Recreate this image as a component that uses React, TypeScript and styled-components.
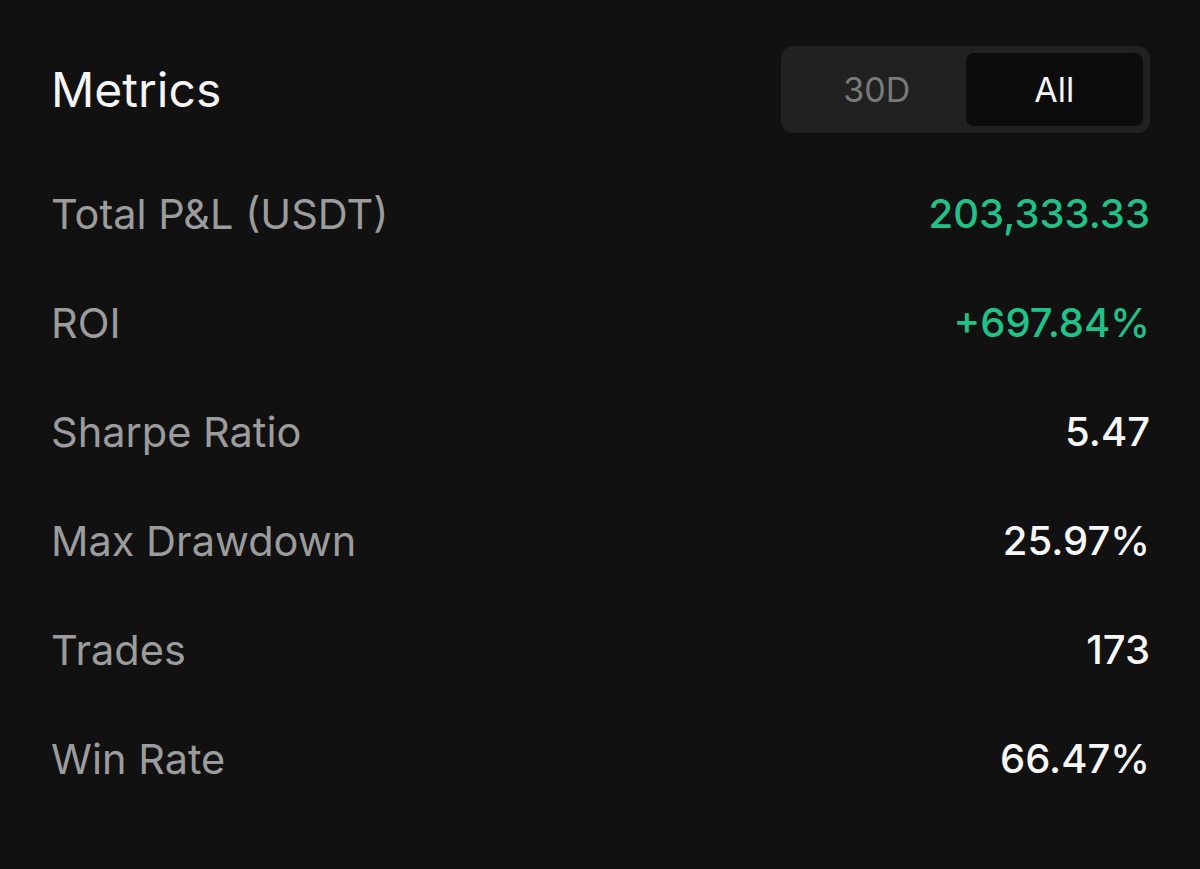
import * as React from 'react';
import styled, { createGlobalStyle } from 'styled-components';

const GlobalStyle = createGlobalStyle`
  html, body {
    margin: 0;
    padding: 0;
    background: #111111;
  }
  body {
    font-family: Inter, "Noto Sans", sans-serif;
  }
`;

const Panel = styled.div`
  width: 1200px;
  height: 869px;
  box-sizing: border-box;
  padding: 46px 50px 0 51px;
  background: #111111;
`;

const Header = styled.div`
  display: flex;
  justify-content: space-between;
  align-items: center;
  height: 87px;
`;

const Title = styled.h2`
  margin: 0;
  font-size: 48px;
  font-weight: 400;
  color: #f4f4f4;
`;

const Toggle = styled.div`
  display: flex;
  width: 369px;
  height: 87px;
  box-sizing: border-box;
  padding: 7px;
  border-radius: 12px;
  background: #212121;
`;

const Segment = styled.div<{ $active?: boolean }>`
  flex: 1;
  display: flex;
  align-items: center;
  justify-content: center;
  border-radius: 8px;
  font-size: 34px;
  color: ${(p) => (p.$active ? '#f5f5f5' : '#7a7a7a')};
  background: ${(p) => (p.$active ? '#0c0c0c' : 'transparent')};
`;

const List = styled.div`
  display: flex;
  flex-direction: column;
  margin-top: 26px;
`;

const Row = styled.div`
  display: flex;
  justify-content: space-between;
  align-items: center;
  height: 109px;
`;

const Label = styled.span`
  font-size: 41.5px;
  color: #9c9c9c;
`;

const Value = styled.span<{ $tone?: 'up' }>`
  font-size: 40px;
  color: ${(p) => (p.$tone === 'up' ? '#21c288' : '#f6f6f6')};
  font-weight: 500;
`;

const metrics: { label: string; value: string; tone?: 'up' }[] = [
  { label: 'Total P&L (USDT)', value: '203,333.33', tone: 'up' },
  { label: 'ROI', value: '+697.84%', tone: 'up' },
  { label: 'Sharpe Ratio', value: '5.47' },
  { label: 'Max Drawdown', value: '25.97%' },
  { label: 'Trades', value: '173' },
  { label: 'Win Rate', value: '66.47%' },
];

export default function App() {
  const [range, setRange] = React.useState<'30D' | 'All'>('All');
  return (
    <Panel>
      <GlobalStyle />
      <Header>
        <Title>Metrics</Title>
        <Toggle>
          <Segment $active={range === '30D'} onClick={() => setRange('30D')}>30D</Segment>
          <Segment $active={range === 'All'} onClick={() => setRange('All')}>All</Segment>
        </Toggle>
      </Header>
      <List>
        {metrics.map((m) => (
          <Row key={m.label}>
            <Label>{m.label}</Label>
            <Value $tone={m.tone}>{m.value}</Value>
          </Row>
        ))}
      </List>
    </Panel>
  );
}
